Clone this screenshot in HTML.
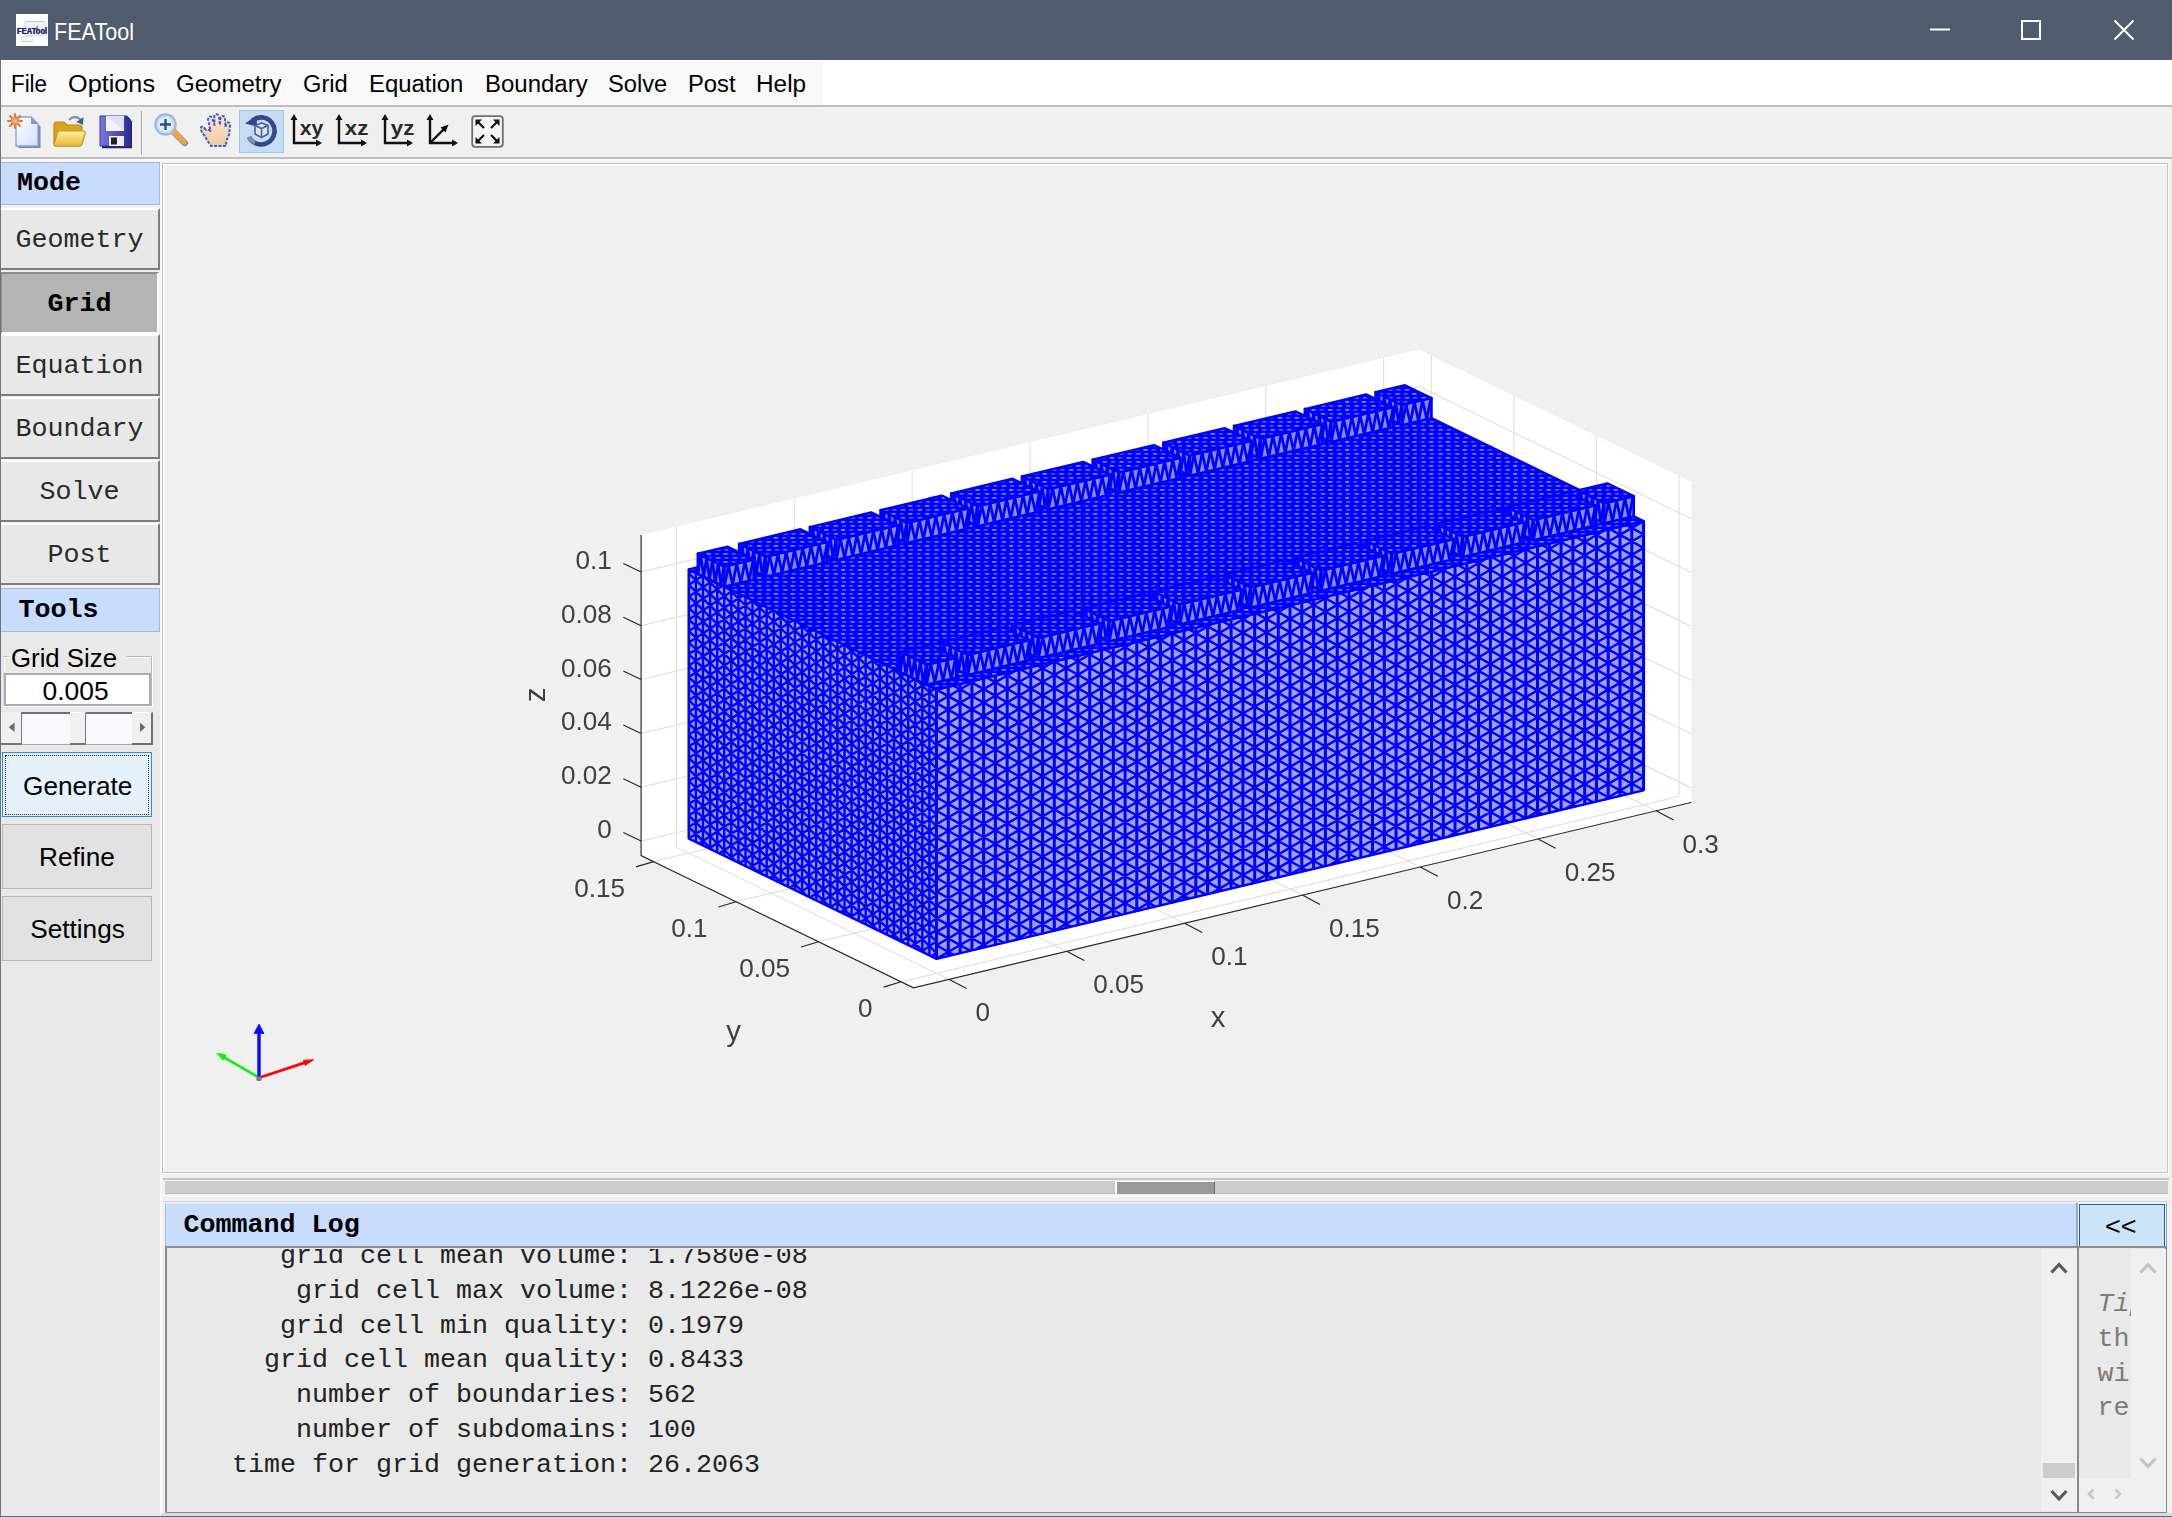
<!DOCTYPE html>
<html lang="en"><head><meta charset="utf-8"><title>FEATool</title>
<style>
html,body{margin:0;padding:0;}
body{width:2172px;height:1517px;position:relative;overflow:hidden;background:#f0f0f0;}
body>div,.a{position:absolute;}
.t{position:absolute;white-space:pre;line-height:normal;}
svg{display:block;overflow:hidden}
</style></head><body>
<div style="left:0px;top:0px;width:2172px;height:60px;background:#505c6d;"></div>
<div style="left:16px;top:14px;width:32.2px;height:32.2px;background:#fefefe;"></div>
<div style="left:24px;top:21px;width:22.3px;height:15.2px;background:#f1f2f9;border:1px solid #dcdfec;border-top:1.4px solid #b9c8e6;border-radius:2.5px;box-sizing:border-box;"></div>
<div style="left:20.7px;top:36.4px;width:12px;height:6px;background:#f4f5fa;border:1px solid #e0e2ee;border-bottom:1.4px solid #d0d3e2;box-sizing:border-box;"></div>
<svg class="a" style="left:16px;top:14px" width="32" height="32"><path d="M18.5 15.5L22 11L22.5 16Z" fill="#8d84ee"/></svg>
<span class="t" style="left:16.9px;transform-origin:0 0;top:25.6px;font-family:'Liberation Sans', Arial, sans-serif;font-size:8.4px;font-weight:bold;color:#2b2663;transform:scaleX(0.9104);text-shadow:0 0 0.7px #2b2663;">FEATool</span>
<span class="t" style="left:54px;transform-origin:0 0;top:18.8px;font-family:'Liberation Sans', Arial, sans-serif;font-size:23.6px;color:#fff;transform:scaleX(0.9149);">FEATool</span>
<svg class="a" style="left:1900px;top:0" width="272" height="60" viewBox="1900 0 272 60"><path d="M1930 29.5H1950" stroke="#fff" stroke-width="2"/><rect x="2022" y="21" width="18" height="18" fill="none" stroke="#fff" stroke-width="2"/><path d="M2114.5 20.5L2133.5 39.5M2133.5 20.5L2114.5 39.5" stroke="#fff" stroke-width="2"/></svg>
<div style="left:0px;top:60px;width:2172px;height:45px;background:#fff;"></div>
<div style="left:1px;top:61px;width:822px;height:43.5px;background:#f9f9f9;"></div>
<span class="t" style="left:11.4px;transform-origin:0 0;top:70.8px;font-family:'Liberation Sans', Arial, sans-serif;font-size:23.5px;color:#000;transform:scaleX(0.9507);">File</span>
<span class="t" style="left:68.2px;transform-origin:0 0;top:70.8px;font-family:'Liberation Sans', Arial, sans-serif;font-size:23.5px;color:#000;transform:scaleX(1.0742);">Options</span>
<span class="t" style="left:176.4px;transform-origin:0 0;top:70.8px;font-family:'Liberation Sans', Arial, sans-serif;font-size:23.5px;color:#000;transform:scaleX(1.0235);">Geometry</span>
<span class="t" style="left:302.8px;transform-origin:0 0;top:70.8px;font-family:'Liberation Sans', Arial, sans-serif;font-size:23.5px;color:#000;transform:scaleX(1.0068);">Grid</span>
<span class="t" style="left:368.7px;transform-origin:0 0;top:70.8px;font-family:'Liberation Sans', Arial, sans-serif;font-size:23.5px;color:#000;transform:scaleX(1.0164);">Equation</span>
<span class="t" style="left:484.7px;transform-origin:0 0;top:70.8px;font-family:'Liberation Sans', Arial, sans-serif;font-size:23.5px;color:#000;transform:scaleX(1.0209);">Boundary</span>
<span class="t" style="left:608.2px;transform-origin:0 0;top:70.8px;font-family:'Liberation Sans', Arial, sans-serif;font-size:23.5px;color:#000;transform:scaleX(1.0070);">Solve</span>
<span class="t" style="left:687.8px;transform-origin:0 0;top:70.8px;font-family:'Liberation Sans', Arial, sans-serif;font-size:23.5px;color:#000;transform:scaleX(1.0123);">Post</span>
<span class="t" style="left:755.7px;transform-origin:0 0;top:70.8px;font-family:'Liberation Sans', Arial, sans-serif;font-size:23.5px;color:#000;transform:scaleX(1.0366);">Help</span>
<div style="left:0px;top:105px;width:2172px;height:2px;background:#bebebe;"></div>
<div style="left:0px;top:107px;width:2172px;height:50px;background:#f0f0f0;"></div>
<div style="left:0px;top:157px;width:2172px;height:2px;background:#bfbfbf;"></div>
<div style="left:0px;top:159px;width:2172px;height:3px;background:#f8f8f8;"></div>
<div style="left:141px;top:111px;width:1px;height:44px;background:#a0a0a0;"></div>
<div style="left:142px;top:111px;width:1px;height:44px;background:#ffffff;"></div>
<div style="left:238.5px;top:109.5px;width:45px;height:43.5px;background:#c5dcf2;border:1px solid #99c9f3;box-sizing:border-box;"></div>
<svg class="a" width="0" height="0"><defs><linearGradient id="gpg" x1="0" y1="0" x2="1" y2="1"><stop offset="0" stop-color="#ffffff"/><stop offset="1" stop-color="#cfe0fa"/></linearGradient><linearGradient id="gfo" x1="0" y1="0" x2="0" y2="1"><stop offset="0" stop-color="#fdf0a0"/><stop offset="1" stop-color="#e9b93a"/></linearGradient><linearGradient id="gsv" x1="0" y1="0" x2="1" y2="0"><stop offset="0" stop-color="#7a78e0"/><stop offset="1" stop-color="#2c2a94"/></linearGradient><linearGradient id="ghd" x1="0" y1="0" x2="0" y2="1"><stop offset="0" stop-color="#fde6d0"/><stop offset="1" stop-color="#f3c9a4"/></linearGradient></defs></svg>
<svg class="a" style="left:6px;top:112px" width="36" height="36" viewBox="0 0 36 36"><path d="M11 6H26L33 13V35H11Z" fill="#7f86b4" transform="translate(1.5,1.5)"/><path d="M10 5H25L32 12V34H10Z" fill="url(#gpg)" stroke="#8ea0d8" stroke-width="1.4"/><path d="M25 5V12H32Z" fill="#8b94c8"/><g stroke="#e8733a" stroke-width="2" stroke-linecap="round"><path d="M9 2V16M2 9H16M4 4L14 14M14 4L4 14"/></g><circle cx="9" cy="9" r="4.2" fill="#f58a52"/><circle cx="9" cy="9" r="2" fill="#ffd37a"/></svg>
<svg class="a" style="left:52px;top:112px" width="36" height="36" viewBox="0 0 36 36"><path d="M2 13Q2 10 5 10H12L15 13H27Q30 13 30 16V31Q30 34 27 34H5Q2 34 2 31Z" fill="#d9a520" stroke="#b98a14" stroke-width="1.2"/><path d="M6 19H31Q34 19 33 22L30 32Q29.5 34 27 34H4Q1.5 34 2.3 31.5Z" fill="url(#gfo)" stroke="#c79a1e" stroke-width="1.2"/><path d="M17 8Q23 2 29 8" fill="none" stroke="#8094b8" stroke-width="2.2"/><path d="M31.5 5L31 13L24.5 10Z" fill="#3b5ea8"/></svg>
<svg class="a" style="left:98px;top:114px" width="36" height="36" viewBox="0 0 36 36"><path d="M3 3H30L33 6V33H3Z" fill="#23206e" transform="translate(1,1.2)"/><path d="M2 2H29L32 5V32H2Z" fill="url(#gsv)" stroke="#3a379e" stroke-width="1"/><path d="M8 2H26V17H8Z" fill="#f4f4fb"/><path d="M8 2H26V17Z" fill="#dfe2f2"/><path d="M11 22H26V32H11Z" fill="#eeeeee"/><path d="M13 23.5H19V30.5H13Z" fill="#222"/></svg>
<svg class="a" style="left:153px;top:112px" width="36" height="36" viewBox="0 0 36 36"><path d="M18 17L31 30" stroke="#9a8c86" stroke-width="6.5" stroke-linecap="round" transform="translate(0.8,1)"/><path d="M19 18L31 30" stroke="#f0a63c" stroke-width="5" stroke-linecap="round"/><circle cx="12.5" cy="12.5" r="10" fill="#dff1fb" stroke="#a9b3e0" stroke-width="2.4"/><circle cx="12.5" cy="12.5" r="8" fill="none" stroke="#c3e3f4" stroke-width="1.6"/><path d="M12.5 7V18M7 12.5H18" stroke="#2a4a9a" stroke-width="2.4"/></svg>
<svg class="a" style="left:198px;top:113px" width="36" height="36" viewBox="0 0 36 36"><path d="M8 17Q4 12 3 14.5Q2 17 6 22Q9 27 13 33H28Q28 27 31 22L32 12Q32 9 29.5 9.5Q28 10 27.5 14L27 6Q27 3 24.5 3Q22.5 3 22.3 6L22 12L21 4Q20.5 1 18.5 1.3Q16.3 1.5 16.3 4L16.5 12L14.5 6Q13.5 3 11.5 3.7Q9.5 4.5 10.3 7.5L12.5 18Q10 16 8 17Z" fill="url(#ghd)" stroke="#3c5fc0" stroke-width="2" stroke-dasharray="3 1.4" stroke-linejoin="round"/></svg>
<svg class="a" style="left:243px;top:112px" width="36" height="36" viewBox="0 0 36 36"><path d="M9.5 8.5A13.5 13.5 0 1 1 6 25" fill="none" stroke="#33478a" stroke-width="4.6"/><path d="M6 25A13.5 13.5 0 0 0 12 30.5" fill="none" stroke="#7f8db8" stroke-width="4.2"/><path d="M2 11.5L13.5 3.5L14 14.5Z" fill="#33478a"/><path d="M12 13.5L18.5 11L25 13.5V22L18.5 25.5L12 22Z" fill="#dce6f6" stroke="#4a5f9c" stroke-width="1.6" stroke-linejoin="round"/><path d="M12 13.5L18.5 16.5L25 13.5M18.5 16.5V25.5" fill="none" stroke="#4a5f9c" stroke-width="1.6"/></svg>
<svg class="a" style="left:290px;top:114px" width="34" height="34" viewBox="0 0 34 34"><path d="M4 4V29H30" fill="none" stroke="#111" stroke-width="2.4"/><path d="M4 0L0.5 6H7.5Z M32 29L26 25.5V32.5Z" fill="#111"/><text x="9.8" y="21.3" font-family="'Liberation Sans',Arial,sans-serif" font-weight="bold" font-size="20.5" fill="#2a2a2a" textLength="23.6" lengthAdjust="spacingAndGlyphs">xy</text></svg>
<svg class="a" style="left:335px;top:114px" width="34" height="34" viewBox="0 0 34 34"><path d="M4 4V29H30" fill="none" stroke="#111" stroke-width="2.4"/><path d="M4 0L0.5 6H7.5Z M32 29L26 25.5V32.5Z" fill="#111"/><text x="9.8" y="21.3" font-family="'Liberation Sans',Arial,sans-serif" font-weight="bold" font-size="20.5" fill="#2a2a2a" textLength="23.6" lengthAdjust="spacingAndGlyphs">xz</text></svg>
<svg class="a" style="left:380.5px;top:114px" width="34" height="34" viewBox="0 0 34 34"><path d="M4 4V29H30" fill="none" stroke="#111" stroke-width="2.4"/><path d="M4 0L0.5 6H7.5Z M32 29L26 25.5V32.5Z" fill="#111"/><text x="9.8" y="21.3" font-family="'Liberation Sans',Arial,sans-serif" font-weight="bold" font-size="20.5" fill="#2a2a2a" textLength="23.6" lengthAdjust="spacingAndGlyphs">yz</text></svg>
<svg class="a" style="left:426px;top:114px" width="34" height="34" viewBox="0 0 34 34"><path d="M4 4V29H30" fill="none" stroke="#111" stroke-width="2.4"/><path d="M4 0L0.5 6H7.5Z M32 29L26 25.5V32.5Z" fill="#111"/><path d="M4 29L18 15" stroke="#111" stroke-width="2.4"/><path d="M22.5 10.5L14.5 13.5L19.5 18.5Z" fill="#111"/></svg>
<svg class="a" style="left:471px;top:114.5px" width="33" height="33" viewBox="0 0 33 33"><rect x="1.2" y="1.2" width="30.6" height="30.6" rx="3" fill="#f4f4f4" stroke="#6f6f6f" stroke-width="1.8"/><g stroke="#111" stroke-width="2.2" fill="none"><path d="M13 13L6 6M20 13L27 6M13 20L6 27M20 20L27 27"/></g><path d="M4.5 4.5H11L4.5 11Z M28.5 4.5H22L28.5 11Z M4.5 28.5H11L4.5 22Z M28.5 28.5H22L28.5 22Z" fill="#111"/></svg>
<div style="left:1px;top:162px;width:158.5px;height:43px;background:#c8dcfd;border:1px solid #a9b8d6;border-left:none;box-sizing:border-box;"></div>
<span class="t" style="left:17px;transform-origin:0 0;top:167.8px;font-family:'Liberation Mono', 'Courier New', monospace;font-size:26.7px;font-weight:bold;color:#000;">Mode</span>
<div style="left:1px;top:208px;width:158.5px;height:62px;background:#e8e8e8;border-top:2px solid #fff;border-right:2px solid #7e7e7e;border-bottom:2px solid #7e7e7e;box-sizing:border-box;"></div>
<span class="t" style="left:15.5px;transform-origin:0 0;top:224.6px;font-family:'Liberation Mono', 'Courier New', monospace;font-size:26.7px;color:#2a2a2a;">Geometry</span>
<div style="left:1px;top:272px;width:158.2px;height:62px;background:#b4b4b4;border-top:2px solid #8c8c8c;border-left:1px solid #8c8c8c;border-right:2px solid #fff;border-bottom:2px solid #fff;box-sizing:border-box;"></div>
<span class="t" style="left:47.5px;transform-origin:0 0;top:288.6px;font-family:'Liberation Mono', 'Courier New', monospace;font-size:26.7px;font-weight:bold;color:#000;">Grid</span>
<div style="left:1px;top:334px;width:158.5px;height:62px;background:#e8e8e8;border-top:2px solid #fff;border-right:2px solid #7e7e7e;border-bottom:2px solid #7e7e7e;box-sizing:border-box;"></div>
<span class="t" style="left:15.5px;transform-origin:0 0;top:350.6px;font-family:'Liberation Mono', 'Courier New', monospace;font-size:26.7px;color:#2a2a2a;">Equation</span>
<div style="left:1px;top:397px;width:158.5px;height:62px;background:#e8e8e8;border-top:2px solid #fff;border-right:2px solid #7e7e7e;border-bottom:2px solid #7e7e7e;box-sizing:border-box;"></div>
<span class="t" style="left:15.5px;transform-origin:0 0;top:413.6px;font-family:'Liberation Mono', 'Courier New', monospace;font-size:26.7px;color:#2a2a2a;">Boundary</span>
<div style="left:1px;top:460px;width:158.5px;height:62px;background:#e8e8e8;border-top:2px solid #fff;border-right:2px solid #7e7e7e;border-bottom:2px solid #7e7e7e;box-sizing:border-box;"></div>
<span class="t" style="left:39.5px;transform-origin:0 0;top:476.6px;font-family:'Liberation Mono', 'Courier New', monospace;font-size:26.7px;color:#2a2a2a;">Solve</span>
<div style="left:1px;top:523px;width:158.5px;height:62px;background:#e8e8e8;border-top:2px solid #fff;border-right:2px solid #7e7e7e;border-bottom:2px solid #7e7e7e;box-sizing:border-box;"></div>
<span class="t" style="left:47.5px;transform-origin:0 0;top:539.6px;font-family:'Liberation Mono', 'Courier New', monospace;font-size:26.7px;color:#2a2a2a;">Post</span>
<div style="left:1px;top:588px;width:158.5px;height:43.5px;background:#c8dcfd;border:1px solid #a9b8d6;border-left:none;box-sizing:border-box;"></div>
<span class="t" style="left:18.5px;transform-origin:0 0;top:594.8px;font-family:'Liberation Mono', 'Courier New', monospace;font-size:26.7px;font-weight:bold;color:#000;">Tools</span>
<div style="left:1px;top:632px;width:159px;height:885px;background:#e9e9e9;"></div>
<div style="left:2.5px;top:656.3px;width:149.5px;height:51px;border:1px solid #b9b9b9;border-bottom:none;border-left-color:#d9d9d9;box-sizing:border-box;box-shadow:1px 1px 0 #fff inset, 1px 0 0 #fff;"></div>
<div style="left:8.5px;top:645px;width:118px;height:28px;background:#e9e9e9;"></div>
<span class="t" style="left:11px;transform-origin:0 0;top:643.3px;font-family:'Liberation Sans', Arial, sans-serif;font-size:26.6px;color:#000;transform:scaleX(0.9690);">Grid Size</span>
<div style="left:4px;top:673px;width:147.2px;height:33.2px;background:#fff;border:2px solid #abadb3;box-sizing:border-box;"></div>
<div style="left:2.5px;top:706.2px;width:150px;height:1.3px;background:#fbfbfb;"></div>
<span class="t" style="left:42.6px;transform-origin:0 0;top:675.7px;font-family:'Liberation Sans', Arial, sans-serif;font-size:26.4px;color:#000;">0.005</span>
<div style="left:2px;top:712.3px;width:150.6px;height:32.5px;background:#f8f8fd;border-bottom:1.5px solid #a8a8a8;box-sizing:border-box;"></div>
<div style="left:21.5px;top:712.3px;width:48.2px;height:1.4px;background:#707070;"></div>
<div style="left:85.4px;top:712.3px;width:46.3px;height:1.4px;background:#707070;"></div>
<div style="left:1.2px;top:712.3px;width:20.6px;height:32.5px;background:#f0f0f0;border-right:1.6px solid #7a7a7a;border-bottom:2px solid #747474;box-sizing:border-box;"></div>
<div style="left:69.7px;top:712.3px;width:16.6px;height:32.5px;background:#f0f0f0;border-right:1.6px solid #757575;border-bottom:2px solid #747474;border-top:1px solid #fdfdfd;box-sizing:border-box;"></div>
<div style="left:131.7px;top:712.3px;width:20.9px;height:32.5px;background:#f0f0f0;border-right:2px solid #6e6e6e;border-bottom:2px solid #707070;border-top:1px solid #fdfdfd;box-sizing:border-box;"></div>
<svg class="a" style="left:0;top:712px" width="160" height="33"><path d="M14.6 10.6V20L8.7 15.3Z M140 10.6V20L145.3 15.3Z" fill="#6a6a6a"/></svg>
<div style="left:2.4px;top:752.1px;width:149.4px;height:65.1px;background:#e5f1fb;border:1.5px solid #2b90ea;box-sizing:border-box;"></div>
<div style="left:4.8px;top:754.6px;width:144.6px;height:60px;border:1.4px dotted #2a2a2a;box-sizing:border-box;"></div>
<span class="t" style="left:22.8px;transform-origin:0 0;top:770.6px;font-family:'Liberation Sans', Arial, sans-serif;font-size:26.2px;color:#000;transform:scaleX(1.0014);">Generate</span>
<div style="left:2.4px;top:824.1px;width:149.4px;height:65px;background:#e1e1e1;border:1.2px solid #b8b8b8;box-sizing:border-box;"></div>
<span class="t" style="left:39.1px;transform-origin:0 0;top:842.1px;font-family:'Liberation Sans', Arial, sans-serif;font-size:26.2px;color:#000;">Refine</span>
<div style="left:2.4px;top:896.2px;width:149.4px;height:65px;background:#e1e1e1;border:1.2px solid #b8b8b8;box-sizing:border-box;"></div>
<span class="t" style="left:30.2px;transform-origin:0 0;top:914.1px;font-family:'Liberation Sans', Arial, sans-serif;font-size:26.2px;color:#000;">Settings</span>
<div style="left:160px;top:162px;width:1.5px;height:1355px;background:#fafafa;"></div>
<div style="left:0px;top:60px;width:1.2px;height:1457px;background:#6a7482;"></div>
<div style="left:162px;top:163px;width:2006px;height:1010px;background:#f0f0f0;border:1.5px solid #c3c3c3;box-sizing:border-box;box-shadow:1.5px 1.5px 0 #fdfdfd inset, 1px 1px 0 #fdfdfd;"></div>
<svg style="position:absolute;left:165px;top:165px;will-change:transform" width="2002" height="1007" viewBox="165 165 2002 1007">
<polygon points="913.5,987.8 1691.3,802.4 1418.9,670.2 641.1,855.6" fill="#ffffff"/>
<polygon points="641.1,855.6 1418.9,670.2 1418.9,349.6 641.1,535" fill="#ffffff"/>
<polygon points="1691.3,802.4 1418.9,670.2 1418.9,349.6 1691.3,481.8" fill="#ffffff"/>
<path d="M948.9 979.3 L676.5 847.2 L676.5 526.6M1066.7 951.3 L794.3 819.1 L794.3 498.5M1184.6 923.2 L912.2 791 L912.2 470.4M1302.4 895.1 L1030 762.9 L1030 442.3M1420.3 867 L1147.9 734.8 L1147.9 414.2M1538.1 838.9 L1265.7 706.8 L1265.7 386.1M1656 810.8 L1383.6 678.7 L1383.6 358.1M901.1 981.8 L1679 796.4 L1679 475.8M818.6 941.7 L1596.4 756.4 L1596.4 435.7M736 901.7 L1513.9 716.3 L1513.9 395.7M653.5 861.6 L1431.3 676.3 L1431.3 355.6M641.1 841.1 L1418.9 655.7 L1691.3 787.9M641.1 787.2 L1418.9 601.9 L1691.3 734M641.1 733.4 L1418.9 548 L1691.3 680.2M641.1 679.5 L1418.9 494.2 L1691.3 626.4M641.1 625.7 L1418.9 440.3 L1691.3 572.5M641.1 571.9 L1418.9 386.5 L1691.3 518.7" fill="none" stroke="#e1e1e1" stroke-width="1.2"/>
<g stroke-linecap="butt"><defs><pattern id="tp" width="16.8" height="8" patternUnits="userSpaceOnUse"><rect width="16.8" height="8" fill="#0000ff"/><rect x="1" y="1.2" width="4.2" height="1.4" fill="#a8a8ff"/><rect x="9.4" y="1.2" width="3.8" height="1.3" fill="#7070ff"/><rect x="2.2" y="5.2" width="3.8" height="1.3" fill="#7c7cff"/><rect x="10.6" y="5.2" width="4.2" height="1.4" fill="#9898ff"/></pattern></defs>
<polygon points="688.9,838.6 936.5,958.8 936.5,689.6 688.9,569.5" fill="#9c9cf6" stroke="#0000ff" stroke-width="2.4" stroke-linejoin="round"/><path d="M688.9 838.6 L688.9 569.5M695.9 842.1 L695.9 572.9M703 845.5 L703 576.3M710.1 848.9 L710.1 579.7M717.2 852.4 L717.2 583.2M724.2 855.8 L724.2 586.6M731.3 859.2 L731.3 590M738.4 862.7 L738.4 593.5M745.5 866.1 L745.5 596.9M752.5 869.5 L752.5 600.3M759.6 873 L759.6 603.8M766.7 876.4 L766.7 607.2M773.8 879.8 L773.8 610.6M780.8 883.3 L780.8 614.1M787.9 886.7 L787.9 617.5M795 890.1 L795 620.9M802.1 893.6 L802.1 624.4M809.1 897 L809.1 627.8M816.2 900.4 L816.2 631.2M823.3 903.9 L823.3 634.7M830.4 907.3 L830.4 638.1M837.4 910.7 L837.4 641.5M844.5 914.2 L844.5 645M851.6 917.6 L851.6 648.4M858.7 921 L858.7 651.8M865.7 924.5 L865.7 655.3M872.8 927.9 L872.8 658.7M879.9 931.3 L879.9 662.1M887 934.8 L887 665.6M894 938.2 L894 669M901.1 941.6 L901.1 672.4M908.2 945.1 L908.2 675.9M915.3 948.5 L915.3 679.3M922.3 951.9 L922.3 682.7M929.4 955.4 L929.4 686.2M936.5 958.8 L936.5 689.6M688.9 827.1 L712.4 850.1M688.9 815.6 L736 861.5M688.9 804 L759.6 873M688.9 792.5 L783.2 884.4M688.9 781 L806.8 895.9M688.9 769.4 L830.4 907.3M688.9 757.9 L854 918.8M688.9 746.4 L877.5 930.2M688.9 734.8 L901.1 941.6M688.9 723.3 L924.7 953.1M688.9 711.7 L936.5 953M688.9 700.2 L936.5 941.5M688.9 688.7 L936.5 930M688.9 677.1 L936.5 918.4M688.9 665.6 L936.5 906.9M688.9 654.1 L936.5 895.3M688.9 642.5 L936.5 883.8M688.9 631 L936.5 872.3M688.9 619.4 L936.5 860.7M688.9 607.9 L936.5 849.2M688.9 596.4 L936.5 837.7M688.9 584.8 L936.5 826.1M688.9 573.3 L936.5 814.6M704.6 577.1 L936.5 803M728.2 588.5 L936.5 791.5M751.7 600 L936.5 780M775.3 611.4 L936.5 768.4M798.9 622.8 L936.5 756.9M822.5 634.3 L936.5 745.4M846.1 645.7 L936.5 733.8M869.7 657.2 L936.5 722.3M893.3 668.6 L936.5 710.8M916.8 680.1 L936.5 699.2M931.4 956.3 L936.5 953M921.3 951.4 L936.5 941.5M911.2 946.5 L936.5 930M901.1 941.6 L936.5 918.4M891 936.7 L936.5 906.9M880.9 931.8 L936.5 895.3M870.8 926.9 L936.5 883.8M860.7 922 L936.5 872.3M850.6 917.1 L936.5 860.7M840.5 912.2 L936.5 849.2M830.4 907.3 L936.5 837.7M820.3 902.4 L936.5 826.1M810.1 897.5 L936.5 814.6M800 892.6 L936.5 803M789.9 887.7 L936.5 791.5M779.8 882.8 L936.5 780M769.7 877.9 L936.5 768.4M759.6 873 L936.5 756.9M749.5 868.1 L936.5 745.4M739.4 863.2 L936.5 733.8M729.3 858.3 L936.5 722.3M719.2 853.4 L936.5 710.8M709.1 848.5 L936.5 699.2M699 843.6 L934.8 688.8M688.9 838.6 L924.7 683.9M688.9 827.1 L914.6 679M688.9 815.6 L904.5 674.1M688.9 804 L894.4 669.2M688.9 792.5 L884.3 664.3M688.9 781 L874.2 659.4M688.9 769.4 L864.1 654.5M688.9 757.9 L854 649.5M688.9 746.4 L843.8 644.6M688.9 734.8 L833.7 639.7M688.9 723.3 L823.6 634.8M688.9 711.7 L813.5 629.9M688.9 700.2 L803.4 625M688.9 688.7 L793.3 620.1M688.9 677.1 L783.2 615.2M688.9 665.6 L773.1 610.3M688.9 654.1 L763 605.4M688.9 642.5 L752.9 600.5M688.9 631 L742.8 595.6M688.9 619.4 L732.7 590.7M688.9 607.9 L722.5 585.8M688.9 596.4 L712.4 580.9M688.9 584.8 L702.3 576M688.9 573.3 L692.2 571.1" fill="none" stroke="#0000ff" stroke-width="2.4"/>
<polygon points="936.5,958.8 1643.6,790.3 1643.6,521.1 936.5,689.6" fill="#a0a0f6" stroke="#0000ff" stroke-width="2.4" stroke-linejoin="round"/><path d="M936.5 958.8 L936.5 689.6M948.3 956 L948.3 686.8M960.1 953.2 L960.1 684M971.9 950.4 L971.9 681.2M983.6 947.6 L983.6 678.4M995.4 944.8 L995.4 675.6M1007.2 941.9 L1007.2 672.7M1019 939.1 L1019 669.9M1030.8 936.3 L1030.8 667.1M1042.6 933.5 L1042.6 664.3M1054.3 930.7 L1054.3 661.5M1066.1 927.9 L1066.1 658.7M1077.9 925.1 L1077.9 655.9M1089.7 922.3 L1089.7 653.1M1101.5 919.5 L1101.5 650.3M1113.3 916.7 L1113.3 647.5M1125.1 913.9 L1125.1 644.7M1136.8 911.1 L1136.8 641.9M1148.6 908.2 L1148.6 639M1160.4 905.4 L1160.4 636.2M1172.2 902.6 L1172.2 633.4M1184 899.8 L1184 630.6M1195.8 897 L1195.8 627.8M1207.6 894.2 L1207.6 625M1219.3 891.4 L1219.3 622.2M1231.1 888.6 L1231.1 619.4M1242.9 885.8 L1242.9 616.6M1254.7 883 L1254.7 613.8M1266.5 880.2 L1266.5 611M1278.3 877.4 L1278.3 608.2M1290 874.5 L1290 605.3M1301.8 871.7 L1301.8 602.5M1313.6 868.9 L1313.6 599.7M1325.4 866.1 L1325.4 596.9M1337.2 863.3 L1337.2 594.1M1349 860.5 L1349 591.3M1360.8 857.7 L1360.8 588.5M1372.5 854.9 L1372.5 585.7M1384.3 852.1 L1384.3 582.9M1396.1 849.3 L1396.1 580.1M1407.9 846.5 L1407.9 577.3M1419.7 843.7 L1419.7 574.5M1431.5 840.8 L1431.5 571.6M1443.3 838 L1443.3 568.8M1455 835.2 L1455 566M1466.8 832.4 L1466.8 563.2M1478.6 829.6 L1478.6 560.4M1490.4 826.8 L1490.4 557.6M1502.2 824 L1502.2 554.8M1514 821.2 L1514 552M1525.8 818.4 L1525.8 549.2M1537.5 815.6 L1537.5 546.4M1549.3 812.8 L1549.3 543.6M1561.1 809.9 L1561.1 540.7M1572.9 807.1 L1572.9 537.9M1584.7 804.3 L1584.7 535.1M1596.5 801.5 L1596.5 532.3M1608.2 798.7 L1608.2 529.5M1620 795.9 L1620 526.7M1631.8 793.1 L1631.8 523.9M1643.6 790.3 L1643.6 521.1" fill="none" stroke="#0000ff" stroke-width="3"/><path d="M1604.3 799.7 L1643.6 776.8M1565 809 L1643.6 763.4M1525.8 818.4 L1643.6 749.9M1486.5 827.7 L1643.6 736.4M1447.2 837.1 L1643.6 723M1407.9 846.5 L1643.6 709.5M1368.6 855.8 L1643.6 696.1M1329.3 865.2 L1643.6 682.6M1290 874.5 L1643.6 669.1M1250.8 883.9 L1643.6 655.7M1211.5 893.3 L1643.6 642.2M1172.2 902.6 L1643.6 628.8M1132.9 912 L1643.6 615.3M1093.6 921.4 L1643.6 601.8M1054.3 930.7 L1643.6 588.4M1015.1 940.1 L1643.6 574.9M975.8 949.4 L1643.6 561.5M936.5 958.8 L1643.6 548M936.5 945.3 L1643.6 534.5M936.5 931.9 L1643.6 521.1M936.5 918.4 L1604.3 530.5M936.5 905 L1565 539.8M936.5 891.5 L1525.8 549.2M936.5 878 L1486.5 558.5M936.5 864.6 L1447.2 567.9M936.5 851.1 L1407.9 577.3M936.5 837.7 L1368.6 586.6M936.5 824.2 L1329.3 596M936.5 810.7 L1290 605.3M936.5 797.3 L1250.8 614.7M936.5 783.8 L1211.5 624.1M936.5 770.4 L1172.2 633.4M936.5 756.9 L1132.9 642.8M936.5 743.4 L1093.6 652.2M936.5 730 L1054.3 661.5M936.5 716.5 L1015.1 670.9M936.5 703.1 L975.8 680.2M936.5 945.3 L953.3 954.8M936.5 931.9 L970.2 950.8M936.5 918.4 L987 946.8M936.5 905 L1003.8 942.8M936.5 891.5 L1020.7 938.7M936.5 878 L1037.5 934.7M936.5 864.6 L1054.3 930.7M936.5 851.1 L1071.2 926.7M936.5 837.7 L1088 922.7M936.5 824.2 L1104.9 918.7M936.5 810.7 L1121.7 914.7M936.5 797.3 L1138.5 910.7M936.5 783.8 L1155.4 906.6M936.5 770.4 L1172.2 902.6M936.5 756.9 L1189 898.6M936.5 743.4 L1205.9 894.6M936.5 730 L1222.7 890.6M936.5 716.5 L1239.5 886.6M936.5 703.1 L1256.4 882.6M936.5 689.6 L1273.2 878.6M953.3 685.6 L1290.1 874.5M970.2 681.6 L1306.9 870.5M987 677.6 L1323.7 866.5M1003.8 673.6 L1340.6 862.5M1020.7 669.5 L1357.4 858.5M1037.5 665.5 L1374.2 854.5M1054.3 661.5 L1391.1 850.5M1071.2 657.5 L1407.9 846.5M1088 653.5 L1424.7 842.4M1104.9 649.5 L1441.6 838.4M1121.7 645.5 L1458.4 834.4M1138.5 641.5 L1475.2 830.4M1155.4 637.4 L1492.1 826.4M1172.2 633.4 L1508.9 822.4M1189 629.4 L1525.8 818.4M1205.9 625.4 L1542.6 814.4M1222.7 621.4 L1559.4 810.4M1239.5 617.4 L1576.3 806.3M1256.4 613.4 L1593.1 802.3M1273.2 609.4 L1609.9 798.3M1290.1 605.3 L1626.8 794.3M1306.9 601.3 L1643.6 790.3M1323.7 597.3 L1643.6 776.8M1340.6 593.3 L1643.6 763.4M1357.4 589.3 L1643.6 749.9M1374.2 585.3 L1643.6 736.4M1391.1 581.3 L1643.6 723M1407.9 577.3 L1643.6 709.5M1424.7 573.2 L1643.6 696.1M1441.6 569.2 L1643.6 682.6M1458.4 565.2 L1643.6 669.1M1475.2 561.2 L1643.6 655.7M1492.1 557.2 L1643.6 642.2M1508.9 553.2 L1643.6 628.8M1525.8 549.2 L1643.6 615.3M1542.6 545.2 L1643.6 601.8M1559.4 541.2 L1643.6 588.4M1576.3 537.1 L1643.6 574.9M1593.1 533.1 L1643.6 561.5M1609.9 529.1 L1643.6 548M1626.8 525.1 L1643.6 534.5" fill="none" stroke="#0000ff" stroke-width="2.4"/>
<polygon points="936.5,689.6 1643.6,521.1 1395.9,400.9 688.8,569.4" fill="url(#tp)" stroke="#0000ff" stroke-width="2.3" stroke-linejoin="round"/>
<polygon points="1375.6,412.4 1402,425.2 1402,405 1375.6,392.2" fill="#8686f4" stroke="#0000ff" stroke-width="2.7" stroke-linejoin="round"/><path d="M1375.6 412.4 L1378.5 393.6M1381.3 415.2 L1384.2 396.4M1387.1 418 L1390 399.2M1392.9 420.8 L1395.8 402M1398.7 423.6 L1401.6 404.8M1378.5 393.6 L1381.3 415.2M1384.2 396.4 L1387.1 418M1390 399.2 L1392.9 420.8M1395.8 402 L1398.7 423.6M1401.6 404.8 L1402 407.9" fill="none" stroke="#0000ff" stroke-width="2.7"/><polygon points="1402,425.2 1431.4,418.2 1431.4,398 1402,405" fill="#8c8cf5" stroke="#0000ff" stroke-width="2.7" stroke-linejoin="round"/><path d="M1402 425.2 L1406.1 404M1410.2 423.2 L1414.4 402M1418.5 421.3 L1422.6 400.1M1426.7 419.3 L1430.9 398.1M1406.1 404 L1410.2 423.2M1414.4 402 L1418.5 421.3M1422.6 400.1 L1426.7 419.3M1430.9 398.1 L1431.4 400.9" fill="none" stroke="#0000ff" stroke-width="2.7"/><polygon points="1402,405 1431.4,398 1405,385.2 1375.6,392.2" fill="url(#tp)" stroke="#0000ff" stroke-width="2.3" stroke-linejoin="round"/>
<polygon points="1304.9,429.2 1331.3,442 1331.3,421.8 1304.9,409" fill="#8686f4" stroke="#0000ff" stroke-width="2.7" stroke-linejoin="round"/><path d="M1304.9 429.2 L1307.7 410.4M1310.6 432 L1313.5 413.2M1316.4 434.8 L1319.3 416M1322.2 437.6 L1325.1 418.8M1328 440.4 L1330.9 421.6M1307.7 410.4 L1310.6 432M1313.5 413.2 L1316.4 434.8M1319.3 416 L1322.2 437.6M1325.1 418.8 L1328 440.4M1330.9 421.6 L1331.3 424.7" fill="none" stroke="#0000ff" stroke-width="2.7"/><polygon points="1331.3,442 1392.6,427.4 1392.6,407.2 1331.3,421.8" fill="#8c8cf5" stroke="#0000ff" stroke-width="2.7" stroke-linejoin="round"/><path d="M1331.3 442 L1335.4 420.9M1339.5 440.1 L1343.6 418.9M1347.8 438.1 L1351.9 416.9M1356 436.1 L1360.1 415M1364.3 434.2 L1368.4 413M1372.5 432.2 L1376.6 411M1380.8 430.2 L1384.9 409.1M1389 428.3 L1392.6 410.1M1335.4 420.9 L1339.5 440.1M1343.6 418.9 L1347.8 438.1M1351.9 416.9 L1356 436.1M1360.1 415 L1364.3 434.2M1368.4 413 L1372.5 432.2M1376.6 411 L1380.8 430.2M1384.9 409.1 L1389 428.3" fill="none" stroke="#0000ff" stroke-width="2.7"/><polygon points="1331.3,421.8 1392.6,407.2 1366.1,394.4 1304.9,409" fill="url(#tp)" stroke="#0000ff" stroke-width="2.3" stroke-linejoin="round"/>
<polygon points="1234.1,446.1 1260.6,458.9 1260.6,438.7 1234.1,425.9" fill="#8686f4" stroke="#0000ff" stroke-width="2.7" stroke-linejoin="round"/><path d="M1234.1 446.1 L1237 427.3M1239.9 448.9 L1242.8 430.1M1245.7 451.7 L1248.6 432.9M1251.5 454.5 L1254.4 435.7M1257.3 457.3 L1260.2 438.5M1237 427.3 L1239.9 448.9M1242.8 430.1 L1245.7 451.7M1248.6 432.9 L1251.5 454.5M1254.4 435.7 L1257.3 457.3M1260.2 438.5 L1260.6 441.6" fill="none" stroke="#0000ff" stroke-width="2.7"/><polygon points="1260.6,458.9 1321.8,444.3 1321.8,424.1 1260.6,438.7" fill="#8c8cf5" stroke="#0000ff" stroke-width="2.7" stroke-linejoin="round"/><path d="M1260.6 458.9 L1264.7 437.7M1268.8 456.9 L1272.9 435.7M1277.1 455 L1281.2 433.8M1285.3 453 L1289.4 431.8M1293.6 451 L1297.7 429.8M1301.8 449.1 L1305.9 427.9M1310.1 447.1 L1314.2 425.9M1318.3 445.1 L1321.8 427M1264.7 437.7 L1268.8 456.9M1272.9 435.7 L1277.1 455M1281.2 433.8 L1285.3 453M1289.4 431.8 L1293.6 451M1297.7 429.8 L1301.8 449.1M1305.9 427.9 L1310.1 447.1M1314.2 425.9 L1318.3 445.1" fill="none" stroke="#0000ff" stroke-width="2.7"/><polygon points="1260.6,438.7 1321.8,424.1 1295.4,411.3 1234.1,425.9" fill="url(#tp)" stroke="#0000ff" stroke-width="2.3" stroke-linejoin="round"/>
<polygon points="1163.4,462.9 1189.9,475.7 1189.9,455.5 1163.4,442.7" fill="#8686f4" stroke="#0000ff" stroke-width="2.7" stroke-linejoin="round"/><path d="M1163.4 462.9 L1166.3 444.1M1169.2 465.7 L1172.1 446.9M1175 468.5 L1177.9 449.7M1180.8 471.3 L1183.7 452.5M1186.6 474.1 L1189.4 455.3M1166.3 444.1 L1169.2 465.7M1172.1 446.9 L1175 468.5M1177.9 449.7 L1180.8 471.3M1183.7 452.5 L1186.6 474.1M1189.4 455.3 L1189.9 458.4" fill="none" stroke="#0000ff" stroke-width="2.7"/><polygon points="1189.9,475.7 1251.1,461.1 1251.1,440.9 1189.9,455.5" fill="#8c8cf5" stroke="#0000ff" stroke-width="2.7" stroke-linejoin="round"/><path d="M1189.9 475.7 L1194 454.6M1198.1 473.8 L1202.2 452.6M1206.4 471.8 L1210.5 450.6M1214.6 469.8 L1218.7 448.7M1222.9 467.9 L1227 446.7M1231.1 465.9 L1235.2 444.7M1239.4 463.9 L1243.5 442.8M1247.6 462 L1251.1 443.8M1194 454.6 L1198.1 473.8M1202.2 452.6 L1206.4 471.8M1210.5 450.6 L1214.6 469.8M1218.7 448.7 L1222.9 467.9M1227 446.7 L1231.1 465.9M1235.2 444.7 L1239.4 463.9M1243.5 442.8 L1247.6 462" fill="none" stroke="#0000ff" stroke-width="2.7"/><polygon points="1189.9,455.5 1251.1,440.9 1224.7,428.1 1163.4,442.7" fill="url(#tp)" stroke="#0000ff" stroke-width="2.3" stroke-linejoin="round"/>
<polygon points="1092.7,479.8 1119.1,492.6 1119.1,472.4 1092.7,459.6" fill="#8686f4" stroke="#0000ff" stroke-width="2.7" stroke-linejoin="round"/><path d="M1092.7 479.8 L1095.6 461M1098.5 482.6 L1101.4 463.8M1104.3 485.4 L1107.2 466.6M1110.1 488.2 L1113 469.4M1115.8 491 L1118.7 472.2M1095.6 461 L1098.5 482.6M1101.4 463.8 L1104.3 485.4M1107.2 466.6 L1110.1 488.2M1113 469.4 L1115.8 491M1118.7 472.2 L1119.1 475.3" fill="none" stroke="#0000ff" stroke-width="2.7"/><polygon points="1119.1,492.6 1180.4,478 1180.4,457.8 1119.1,472.4" fill="#8c8cf5" stroke="#0000ff" stroke-width="2.7" stroke-linejoin="round"/><path d="M1119.1 492.6 L1123.3 471.4M1127.4 490.6 L1131.5 469.4M1135.6 488.7 L1139.8 467.5M1143.9 486.7 L1148 465.5M1152.1 484.7 L1156.3 463.5M1160.4 482.8 L1164.5 461.6M1168.6 480.8 L1172.8 459.6M1176.9 478.8 L1180.4 460.7M1123.3 471.4 L1127.4 490.6M1131.5 469.4 L1135.6 488.7M1139.8 467.5 L1143.9 486.7M1148 465.5 L1152.1 484.7M1156.3 463.5 L1160.4 482.8M1164.5 461.6 L1168.6 480.8M1172.8 459.6 L1176.9 478.8" fill="none" stroke="#0000ff" stroke-width="2.7"/><polygon points="1119.1,472.4 1180.4,457.8 1154,445 1092.7,459.6" fill="url(#tp)" stroke="#0000ff" stroke-width="2.3" stroke-linejoin="round"/>
<polygon points="1022,496.6 1048.4,509.4 1048.4,489.2 1022,476.4" fill="#8686f4" stroke="#0000ff" stroke-width="2.7" stroke-linejoin="round"/><path d="M1022 496.6 L1024.9 477.8M1027.8 499.4 L1030.7 480.6M1033.6 502.2 L1036.5 483.4M1039.4 505 L1042.2 486.2M1045.1 507.8 L1048 489M1024.9 477.8 L1027.8 499.4M1030.7 480.6 L1033.6 502.2M1036.5 483.4 L1039.4 505M1042.2 486.2 L1045.1 507.8M1048 489 L1048.4 492.1" fill="none" stroke="#0000ff" stroke-width="2.7"/><polygon points="1048.4,509.4 1109.7,494.8 1109.7,474.6 1048.4,489.2" fill="#8c8cf5" stroke="#0000ff" stroke-width="2.7" stroke-linejoin="round"/><path d="M1048.4 509.4 L1052.6 488.3M1056.7 507.5 L1060.8 486.3M1064.9 505.5 L1069.1 484.3M1073.2 503.5 L1077.3 482.4M1081.4 501.6 L1085.6 480.4M1089.7 499.6 L1093.8 478.4M1097.9 497.6 L1102.1 476.5M1106.2 495.7 L1109.7 477.5M1052.6 488.3 L1056.7 507.5M1060.8 486.3 L1064.9 505.5M1069.1 484.3 L1073.2 503.5M1077.3 482.4 L1081.4 501.6M1085.6 480.4 L1089.7 499.6M1093.8 478.4 L1097.9 497.6M1102.1 476.5 L1106.2 495.7" fill="none" stroke="#0000ff" stroke-width="2.7"/><polygon points="1048.4,489.2 1109.7,474.6 1083.3,461.8 1022,476.4" fill="url(#tp)" stroke="#0000ff" stroke-width="2.3" stroke-linejoin="round"/>
<polygon points="951.3,513.5 977.7,526.3 977.7,506.1 951.3,493.3" fill="#8686f4" stroke="#0000ff" stroke-width="2.7" stroke-linejoin="round"/><path d="M951.3 513.5 L954.2 494.7M957.1 516.3 L960 497.5M962.9 519.1 L965.8 500.3M968.6 521.9 L971.5 503.1M974.4 524.7 L977.3 505.9M954.2 494.7 L957.1 516.3M960 497.5 L962.9 519.1M965.8 500.3 L968.6 521.9M971.5 503.1 L974.4 524.7M977.3 505.9 L977.7 509" fill="none" stroke="#0000ff" stroke-width="2.7"/><polygon points="977.7,526.3 1039,511.7 1039,491.5 977.7,506.1" fill="#8c8cf5" stroke="#0000ff" stroke-width="2.7" stroke-linejoin="round"/><path d="M977.7 526.3 L981.8 505.1M986 524.3 L990.1 503.1M994.2 522.4 L998.3 501.2M1002.5 520.4 L1006.6 499.2M1010.7 518.4 L1014.8 497.3M1019 516.5 L1023.1 495.3M1027.2 514.5 L1031.3 493.3M1035.5 512.5 L1039 494.4M981.8 505.1 L986 524.3M990.1 503.1 L994.2 522.4M998.3 501.2 L1002.5 520.4M1006.6 499.2 L1010.7 518.4M1014.8 497.3 L1019 516.5M1023.1 495.3 L1027.2 514.5M1031.3 493.3 L1035.5 512.5" fill="none" stroke="#0000ff" stroke-width="2.7"/><polygon points="977.7,506.1 1039,491.5 1012.6,478.7 951.3,493.3" fill="url(#tp)" stroke="#0000ff" stroke-width="2.3" stroke-linejoin="round"/>
<polygon points="880.6,530.3 907,543.1 907,522.9 880.6,510.1" fill="#8686f4" stroke="#0000ff" stroke-width="2.7" stroke-linejoin="round"/><path d="M880.6 530.3 L883.5 511.5M886.4 533.1 L889.3 514.3M892.2 535.9 L895 517.1M897.9 538.7 L900.8 519.9M903.7 541.5 L906.6 522.7M883.5 511.5 L886.4 533.1M889.3 514.3 L892.2 535.9M895 517.1 L897.9 538.7M900.8 519.9 L903.7 541.5M906.6 522.7 L907 525.8" fill="none" stroke="#0000ff" stroke-width="2.7"/><polygon points="907,543.1 968.3,528.5 968.3,508.3 907,522.9" fill="#8c8cf5" stroke="#0000ff" stroke-width="2.7" stroke-linejoin="round"/><path d="M907 543.1 L911.1 522M915.3 541.2 L919.4 520M923.5 539.2 L927.6 518M931.8 537.2 L935.9 516.1M940 535.3 L944.1 514.1M948.3 533.3 L952.4 512.1M956.5 531.3 L960.6 510.2M964.8 529.4 L968.3 511.2M911.1 522 L915.3 541.2M919.4 520 L923.5 539.2M927.6 518 L931.8 537.2M935.9 516.1 L940 535.3M944.1 514.1 L948.3 533.3M952.4 512.1 L956.5 531.3M960.6 510.2 L964.8 529.4" fill="none" stroke="#0000ff" stroke-width="2.7"/><polygon points="907,522.9 968.3,508.3 941.9,495.5 880.6,510.1" fill="url(#tp)" stroke="#0000ff" stroke-width="2.3" stroke-linejoin="round"/>
<polygon points="809.9,547.2 836.3,560 836.3,539.8 809.9,527" fill="#8686f4" stroke="#0000ff" stroke-width="2.7" stroke-linejoin="round"/><path d="M809.9 547.2 L812.8 528.4M815.7 550 L818.6 531.2M821.4 552.8 L824.3 534M827.2 555.6 L830.1 536.8M833 558.4 L835.9 539.6M812.8 528.4 L815.7 550M818.6 531.2 L821.4 552.8M824.3 534 L827.2 555.6M830.1 536.8 L833 558.4M835.9 539.6 L836.3 542.7" fill="none" stroke="#0000ff" stroke-width="2.7"/><polygon points="836.3,560 897.6,545.4 897.6,525.2 836.3,539.8" fill="#8c8cf5" stroke="#0000ff" stroke-width="2.7" stroke-linejoin="round"/><path d="M836.3 560 L840.4 538.8M844.6 558 L848.7 536.9M852.8 556.1 L856.9 534.9M861.1 554.1 L865.2 532.9M869.3 552.1 L873.4 531M877.6 550.2 L881.7 529M885.8 548.2 L889.9 527M894.1 546.2 L897.6 528.1M840.4 538.8 L844.6 558M848.7 536.9 L852.8 556.1M856.9 534.9 L861.1 554.1M865.2 532.9 L869.3 552.1M873.4 531 L877.6 550.2M881.7 529 L885.8 548.2M889.9 527 L894.1 546.2" fill="none" stroke="#0000ff" stroke-width="2.7"/><polygon points="836.3,539.8 897.6,525.2 871.2,512.4 809.9,527" fill="url(#tp)" stroke="#0000ff" stroke-width="2.3" stroke-linejoin="round"/>
<polygon points="739.2,564 765.6,576.8 765.6,556.7 739.2,543.8" fill="#8686f4" stroke="#0000ff" stroke-width="2.7" stroke-linejoin="round"/><path d="M739.2 564 L742.1 545.2M745 566.8 L747.8 548M750.7 569.6 L753.6 550.8M756.5 572.4 L759.4 553.6M762.3 575.2 L765.2 556.5M742.1 545.2 L745 566.8M747.8 548 L750.7 569.6M753.6 550.8 L756.5 572.4M759.4 553.6 L762.3 575.2M765.2 556.5 L765.6 559.5" fill="none" stroke="#0000ff" stroke-width="2.7"/><polygon points="765.6,576.8 826.9,562.2 826.9,542 765.6,556.7" fill="#8c8cf5" stroke="#0000ff" stroke-width="2.7" stroke-linejoin="round"/><path d="M765.6 576.8 L769.7 555.7M773.8 574.9 L778 553.7M782.1 572.9 L786.2 551.7M790.3 570.9 L794.5 549.8M798.6 569 L802.7 547.8M806.8 567 L811 545.8M815.1 565 L819.2 543.9M823.3 563.1 L826.9 544.9M769.7 555.7 L773.8 574.9M778 553.7 L782.1 572.9M786.2 551.7 L790.3 570.9M794.5 549.8 L798.6 569M802.7 547.8 L806.8 567M811 545.8 L815.1 565M819.2 543.9 L823.3 563.1" fill="none" stroke="#0000ff" stroke-width="2.7"/><polygon points="765.6,556.7 826.9,542 800.5,529.2 739.2,543.8" fill="url(#tp)" stroke="#0000ff" stroke-width="2.3" stroke-linejoin="round"/>
<polygon points="697.9,573.9 724.3,586.7 724.3,566.5 697.9,553.7" fill="#8686f4" stroke="#0000ff" stroke-width="2.7" stroke-linejoin="round"/><path d="M697.9 573.9 L700.8 555.1M703.7 576.7 L706.6 557.9M709.5 579.5 L712.4 560.7M715.3 582.3 L718.2 563.5M721 585.1 L723.9 566.3M700.8 555.1 L703.7 576.7M706.6 557.9 L709.5 579.5M712.4 560.7 L715.3 582.3M718.2 563.5 L721 585.1M723.9 566.3 L724.3 569.4" fill="none" stroke="#0000ff" stroke-width="2.7"/><polygon points="724.3,586.7 753.8,579.7 753.8,559.5 724.3,566.5" fill="#8c8cf5" stroke="#0000ff" stroke-width="2.7" stroke-linejoin="round"/><path d="M724.3 586.7 L728.5 565.5M732.6 584.7 L736.7 563.5M740.8 582.7 L745 561.6M749.1 580.8 L753.2 559.6M728.5 565.5 L732.6 584.7M736.7 563.5 L740.8 582.7M745 561.6 L749.1 580.8M753.2 559.6 L753.8 562.3" fill="none" stroke="#0000ff" stroke-width="2.7"/><polygon points="724.3,566.5 753.8,559.5 727.4,546.6 697.9,553.7" fill="url(#tp)" stroke="#0000ff" stroke-width="2.3" stroke-linejoin="round"/>
<polygon points="1577.8,510.5 1604.2,523.3 1604.2,503.1 1577.8,490.3" fill="#8686f4" stroke="#0000ff" stroke-width="2.7" stroke-linejoin="round"/><path d="M1577.8 510.5 L1580.7 491.7M1583.6 513.3 L1586.5 494.5M1589.4 516.1 L1592.3 497.3M1595.2 518.9 L1598 500.1M1600.9 521.7 L1603.8 502.9M1580.7 491.7 L1583.6 513.3M1586.5 494.5 L1589.4 516.1M1592.3 497.3 L1595.2 518.9M1598 500.1 L1600.9 521.7M1603.8 502.9 L1604.2 506" fill="none" stroke="#0000ff" stroke-width="2.7"/><polygon points="1604.2,523.3 1633.7,516.3 1633.7,496.1 1604.2,503.1" fill="#8c8cf5" stroke="#0000ff" stroke-width="2.7" stroke-linejoin="round"/><path d="M1604.2 523.3 L1608.4 502.1M1612.5 521.3 L1616.6 500.2M1620.7 519.4 L1624.9 498.2M1629 517.4 L1633.1 496.2M1608.4 502.1 L1612.5 521.3M1616.6 500.2 L1620.7 519.4M1624.9 498.2 L1629 517.4M1633.1 496.2 L1633.7 499" fill="none" stroke="#0000ff" stroke-width="2.7"/><polygon points="1604.2,503.1 1633.7,496.1 1607.3,483.3 1577.8,490.3" fill="url(#tp)" stroke="#0000ff" stroke-width="2.3" stroke-linejoin="round"/>
<polygon points="1507.1,527.3 1533.5,540.2 1533.5,520 1507.1,507.2" fill="#8686f4" stroke="#0000ff" stroke-width="2.7" stroke-linejoin="round"/><path d="M1507.1 527.3 L1510 508.6M1512.9 530.1 L1515.8 511.4M1518.7 532.9 L1521.6 514.2M1524.4 535.8 L1527.3 517M1530.2 538.6 L1533.1 519.8M1510 508.6 L1512.9 530.1M1515.8 511.4 L1518.7 532.9M1521.6 514.2 L1524.4 535.8M1527.3 517 L1530.2 538.6M1533.1 519.8 L1533.5 522.9" fill="none" stroke="#0000ff" stroke-width="2.7"/><polygon points="1533.5,540.2 1594.8,525.6 1594.8,505.4 1533.5,520" fill="#8c8cf5" stroke="#0000ff" stroke-width="2.7" stroke-linejoin="round"/><path d="M1533.5 540.2 L1537.6 519M1541.8 538.2 L1545.9 517M1550 536.2 L1554.1 515.1M1558.3 534.3 L1562.4 513.1M1566.5 532.3 L1570.6 511.1M1574.8 530.3 L1578.9 509.2M1583 528.4 L1587.1 507.2M1591.3 526.4 L1594.8 508.2M1537.6 519 L1541.8 538.2M1545.9 517 L1550 536.2M1554.1 515.1 L1558.3 534.3M1562.4 513.1 L1566.5 532.3M1570.6 511.1 L1574.8 530.3M1578.9 509.2 L1583 528.4M1587.1 507.2 L1591.3 526.4" fill="none" stroke="#0000ff" stroke-width="2.7"/><polygon points="1533.5,520 1594.8,505.4 1568.4,492.5 1507.1,507.2" fill="url(#tp)" stroke="#0000ff" stroke-width="2.3" stroke-linejoin="round"/>
<polygon points="1436.4,544.2 1462.8,557 1462.8,536.8 1436.4,524" fill="#8686f4" stroke="#0000ff" stroke-width="2.7" stroke-linejoin="round"/><path d="M1436.4 544.2 L1439.3 525.4M1442.2 547 L1445.1 528.2M1448 549.8 L1450.8 531M1453.7 552.6 L1456.6 533.8M1459.5 555.4 L1462.4 536.6M1439.3 525.4 L1442.2 547M1445.1 528.2 L1448 549.8M1450.8 531 L1453.7 552.6M1456.6 533.8 L1459.5 555.4M1462.4 536.6 L1462.8 539.7" fill="none" stroke="#0000ff" stroke-width="2.7"/><polygon points="1462.8,557 1524.1,542.4 1524.1,522.2 1462.8,536.8" fill="#8c8cf5" stroke="#0000ff" stroke-width="2.7" stroke-linejoin="round"/><path d="M1462.8 557 L1466.9 535.8M1471.1 555 L1475.2 533.9M1479.3 553.1 L1483.4 531.9M1487.6 551.1 L1491.7 529.9M1495.8 549.1 L1499.9 528M1504.1 547.2 L1508.2 526M1512.3 545.2 L1516.4 524M1520.6 543.2 L1524.1 525.1M1466.9 535.8 L1471.1 555M1475.2 533.9 L1479.3 553.1M1483.4 531.9 L1487.6 551.1M1491.7 529.9 L1495.8 549.1M1499.9 528 L1504.1 547.2M1508.2 526 L1512.3 545.2M1516.4 524 L1520.6 543.2" fill="none" stroke="#0000ff" stroke-width="2.7"/><polygon points="1462.8,536.8 1524.1,522.2 1497.7,509.4 1436.4,524" fill="url(#tp)" stroke="#0000ff" stroke-width="2.3" stroke-linejoin="round"/>
<polygon points="1365.7,561 1392.1,573.9 1392.1,553.7 1365.7,540.9" fill="#8686f4" stroke="#0000ff" stroke-width="2.7" stroke-linejoin="round"/><path d="M1365.7 561 L1368.6 542.3M1371.5 563.8 L1374.4 545.1M1377.2 566.6 L1380.1 547.9M1383 569.5 L1385.9 550.7M1388.8 572.3 L1391.7 553.5M1368.6 542.3 L1371.5 563.8M1374.4 545.1 L1377.2 566.6M1380.1 547.9 L1383 569.5M1385.9 550.7 L1388.8 572.3M1391.7 553.5 L1392.1 556.6" fill="none" stroke="#0000ff" stroke-width="2.7"/><polygon points="1392.1,573.9 1453.4,559.3 1453.4,539.1 1392.1,553.7" fill="#8c8cf5" stroke="#0000ff" stroke-width="2.7" stroke-linejoin="round"/><path d="M1392.1 573.9 L1396.2 552.7M1400.4 571.9 L1404.5 550.7M1408.6 569.9 L1412.7 548.8M1416.8 568 L1421 546.8M1425.1 566 L1429.2 544.8M1433.3 564 L1437.5 542.9M1441.6 562.1 L1445.7 540.9M1449.8 560.1 L1453.4 541.9M1396.2 552.7 L1400.4 571.9M1404.5 550.7 L1408.6 569.9M1412.7 548.8 L1416.8 568M1421 546.8 L1425.1 566M1429.2 544.8 L1433.3 564M1437.5 542.9 L1441.6 562.1M1445.7 540.9 L1449.8 560.1" fill="none" stroke="#0000ff" stroke-width="2.7"/><polygon points="1392.1,553.7 1453.4,539.1 1427,526.2 1365.7,540.9" fill="url(#tp)" stroke="#0000ff" stroke-width="2.3" stroke-linejoin="round"/>
<polygon points="1295,577.9 1321.4,590.7 1321.4,570.5 1295,557.7" fill="#8686f4" stroke="#0000ff" stroke-width="2.7" stroke-linejoin="round"/><path d="M1295 577.9 L1297.9 559.1M1300.8 580.7 L1303.6 561.9M1306.5 583.5 L1309.4 564.7M1312.3 586.3 L1315.2 567.5M1318.1 589.1 L1321 570.3M1297.9 559.1 L1300.8 580.7M1303.6 561.9 L1306.5 583.5M1309.4 564.7 L1312.3 586.3M1315.2 567.5 L1318.1 589.1M1321 570.3 L1321.4 573.4" fill="none" stroke="#0000ff" stroke-width="2.7"/><polygon points="1321.4,590.7 1382.7,576.1 1382.7,555.9 1321.4,570.5" fill="#8c8cf5" stroke="#0000ff" stroke-width="2.7" stroke-linejoin="round"/><path d="M1321.4 590.7 L1325.5 569.5M1329.6 588.7 L1333.8 567.6M1337.9 586.8 L1342 565.6M1346.1 584.8 L1350.3 563.6M1354.4 582.8 L1358.5 561.7M1362.6 580.9 L1366.8 559.7M1370.9 578.9 L1375 557.7M1379.1 576.9 L1382.7 558.8M1325.5 569.5 L1329.6 588.7M1333.8 567.6 L1337.9 586.8M1342 565.6 L1346.1 584.8M1350.3 563.6 L1354.4 582.8M1358.5 561.7 L1362.6 580.9M1366.8 559.7 L1370.9 578.9M1375 557.7 L1379.1 576.9" fill="none" stroke="#0000ff" stroke-width="2.7"/><polygon points="1321.4,570.5 1382.7,555.9 1356.3,543.1 1295,557.7" fill="url(#tp)" stroke="#0000ff" stroke-width="2.3" stroke-linejoin="round"/>
<polygon points="1224.3,594.7 1250.7,607.6 1250.7,587.4 1224.3,574.6" fill="#8686f4" stroke="#0000ff" stroke-width="2.7" stroke-linejoin="round"/><path d="M1224.3 594.7 L1227.2 576M1230 597.5 L1232.9 578.8M1235.8 600.4 L1238.7 581.6M1241.6 603.2 L1244.5 584.4M1247.4 606 L1250.3 587.2M1227.2 576 L1230 597.5M1232.9 578.8 L1235.8 600.4M1238.7 581.6 L1241.6 603.2M1244.5 584.4 L1247.4 606M1250.3 587.2 L1250.7 590.3" fill="none" stroke="#0000ff" stroke-width="2.7"/><polygon points="1250.7,607.6 1312,593 1312,572.8 1250.7,587.4" fill="#8c8cf5" stroke="#0000ff" stroke-width="2.7" stroke-linejoin="round"/><path d="M1250.7 607.6 L1254.8 586.4M1258.9 605.6 L1263.1 584.4M1267.2 603.6 L1271.3 582.5M1275.4 601.7 L1279.6 580.5M1283.7 599.7 L1287.8 578.5M1291.9 597.7 L1296.1 576.6M1300.2 595.8 L1304.3 574.6M1308.4 593.8 L1312 575.7M1254.8 586.4 L1258.9 605.6M1263.1 584.4 L1267.2 603.6M1271.3 582.5 L1275.4 601.7M1279.6 580.5 L1283.7 599.7M1287.8 578.5 L1291.9 597.7M1296.1 576.6 L1300.2 595.8M1304.3 574.6 L1308.4 593.8" fill="none" stroke="#0000ff" stroke-width="2.7"/><polygon points="1250.7,587.4 1312,572.8 1285.5,560 1224.3,574.6" fill="url(#tp)" stroke="#0000ff" stroke-width="2.3" stroke-linejoin="round"/>
<polygon points="1153.6,611.6 1180,624.4 1180,604.2 1153.6,591.4" fill="#8686f4" stroke="#0000ff" stroke-width="2.7" stroke-linejoin="round"/><path d="M1153.6 611.6 L1156.4 592.8M1159.3 614.4 L1162.2 595.6M1165.1 617.2 L1168 598.4M1170.9 620 L1173.8 601.2M1176.7 622.8 L1179.6 604M1156.4 592.8 L1159.3 614.4M1162.2 595.6 L1165.1 617.2M1168 598.4 L1170.9 620M1173.8 601.2 L1176.7 622.8M1179.6 604 L1180 607.1" fill="none" stroke="#0000ff" stroke-width="2.7"/><polygon points="1180,624.4 1241.3,609.8 1241.3,589.6 1180,604.2" fill="#8c8cf5" stroke="#0000ff" stroke-width="2.7" stroke-linejoin="round"/><path d="M1180 624.4 L1184.1 603.2M1188.2 622.4 L1192.3 601.3M1196.5 620.5 L1200.6 599.3M1204.7 618.5 L1208.8 597.3M1213 616.5 L1217.1 595.4M1221.2 614.6 L1225.3 593.4M1229.5 612.6 L1233.6 591.4M1237.7 610.6 L1241.3 592.5M1184.1 603.2 L1188.2 622.4M1192.3 601.3 L1196.5 620.5M1200.6 599.3 L1204.7 618.5M1208.8 597.3 L1213 616.5M1217.1 595.4 L1221.2 614.6M1225.3 593.4 L1229.5 612.6M1233.6 591.4 L1237.7 610.6" fill="none" stroke="#0000ff" stroke-width="2.7"/><polygon points="1180,604.2 1241.3,589.6 1214.8,576.8 1153.6,591.4" fill="url(#tp)" stroke="#0000ff" stroke-width="2.3" stroke-linejoin="round"/>
<polygon points="1082.8,628.4 1109.3,641.3 1109.3,621.1 1082.8,608.3" fill="#8686f4" stroke="#0000ff" stroke-width="2.7" stroke-linejoin="round"/><path d="M1082.8 628.4 L1085.7 609.7M1088.6 631.2 L1091.5 612.5M1094.4 634.1 L1097.3 615.3M1100.2 636.9 L1103.1 618.1M1106 639.7 L1108.8 620.9M1085.7 609.7 L1088.6 631.2M1091.5 612.5 L1094.4 634.1M1097.3 615.3 L1100.2 636.9M1103.1 618.1 L1106 639.7M1108.8 620.9 L1109.3 624" fill="none" stroke="#0000ff" stroke-width="2.7"/><polygon points="1109.3,641.3 1170.5,626.7 1170.5,606.5 1109.3,621.1" fill="#8c8cf5" stroke="#0000ff" stroke-width="2.7" stroke-linejoin="round"/><path d="M1109.3 641.3 L1113.4 620.1M1117.5 639.3 L1121.6 618.1M1125.8 637.3 L1129.9 616.2M1134 635.4 L1138.1 614.2M1142.3 633.4 L1146.4 612.2M1150.5 631.4 L1154.6 610.3M1158.8 629.5 L1162.9 608.3M1167 627.5 L1170.5 609.4M1113.4 620.1 L1117.5 639.3M1121.6 618.1 L1125.8 637.3M1129.9 616.2 L1134 635.4M1138.1 614.2 L1142.3 633.4M1146.4 612.2 L1150.5 631.4M1154.6 610.3 L1158.8 629.5M1162.9 608.3 L1167 627.5" fill="none" stroke="#0000ff" stroke-width="2.7"/><polygon points="1109.3,621.1 1170.5,606.5 1144.1,593.7 1082.8,608.3" fill="url(#tp)" stroke="#0000ff" stroke-width="2.3" stroke-linejoin="round"/>
<polygon points="1012.1,645.3 1038.6,658.1 1038.6,637.9 1012.1,625.1" fill="#8686f4" stroke="#0000ff" stroke-width="2.7" stroke-linejoin="round"/><path d="M1012.1 645.3 L1015 626.5M1017.9 648.1 L1020.8 629.3M1023.7 650.9 L1026.6 632.1M1029.5 653.7 L1032.4 634.9M1035.2 656.5 L1038.1 637.7M1015 626.5 L1017.9 648.1M1020.8 629.3 L1023.7 650.9M1026.6 632.1 L1029.5 653.7M1032.4 634.9 L1035.2 656.5M1038.1 637.7 L1038.6 640.8" fill="none" stroke="#0000ff" stroke-width="2.7"/><polygon points="1038.6,658.1 1099.8,643.5 1099.8,623.3 1038.6,637.9" fill="#8c8cf5" stroke="#0000ff" stroke-width="2.7" stroke-linejoin="round"/><path d="M1038.6 658.1 L1042.7 636.9M1046.8 656.1 L1050.9 635M1055.1 654.2 L1059.2 633M1063.3 652.2 L1067.4 631M1071.5 650.2 L1075.7 629.1M1079.8 648.3 L1083.9 627.1M1088 646.3 L1092.2 625.1M1096.3 644.4 L1099.8 626.2M1042.7 636.9 L1046.8 656.1M1050.9 635 L1055.1 654.2M1059.2 633 L1063.3 652.2M1067.4 631 L1071.5 650.2M1075.7 629.1 L1079.8 648.3M1083.9 627.1 L1088 646.3M1092.2 625.1 L1096.3 644.4" fill="none" stroke="#0000ff" stroke-width="2.7"/><polygon points="1038.6,637.9 1099.8,623.3 1073.4,610.5 1012.1,625.1" fill="url(#tp)" stroke="#0000ff" stroke-width="2.3" stroke-linejoin="round"/>
<polygon points="941.4,662.1 967.8,675 967.8,654.8 941.4,642" fill="#8686f4" stroke="#0000ff" stroke-width="2.7" stroke-linejoin="round"/><path d="M941.4 662.1 L944.3 643.4M947.2 665 L950.1 646.2M953 667.8 L955.9 649M958.8 670.6 L961.7 651.8M964.5 673.4 L967.4 654.6M944.3 643.4 L947.2 665M950.1 646.2 L953 667.8M955.9 649 L958.8 670.6M961.7 651.8 L964.5 673.4M967.4 654.6 L967.8 657.7" fill="none" stroke="#0000ff" stroke-width="2.7"/><polygon points="967.8,675 1029.1,660.4 1029.1,640.2 967.8,654.8" fill="#8c8cf5" stroke="#0000ff" stroke-width="2.7" stroke-linejoin="round"/><path d="M967.8 675 L972 653.8M976.1 673 L980.2 651.8M984.3 671 L988.5 649.9M992.6 669.1 L996.7 647.9M1000.8 667.1 L1005 645.9M1009.1 665.1 L1013.2 644M1017.3 663.2 L1021.5 642M1025.6 661.2 L1029.1 643.1M972 653.8 L976.1 673M980.2 651.8 L984.3 671M988.5 649.9 L992.6 669.1M996.7 647.9 L1000.8 667.1M1005 645.9 L1009.1 665.1M1013.2 644 L1017.3 663.2M1021.5 642 L1025.6 661.2" fill="none" stroke="#0000ff" stroke-width="2.7"/><polygon points="967.8,654.8 1029.1,640.2 1002.7,627.4 941.4,642" fill="url(#tp)" stroke="#0000ff" stroke-width="2.3" stroke-linejoin="round"/>
<polygon points="900.2,672 926.6,684.8 926.6,664.6 900.2,651.8" fill="#8686f4" stroke="#0000ff" stroke-width="2.7" stroke-linejoin="round"/><path d="M900.2 672 L903.1 653.2M906 674.8 L908.8 656M911.7 677.6 L914.6 658.8M917.5 680.4 L920.4 661.6M923.3 683.2 L926.2 664.4M903.1 653.2 L906 674.8M908.8 656 L911.7 677.6M914.6 658.8 L917.5 680.4M920.4 661.6 L923.3 683.2M926.2 664.4 L926.6 667.5" fill="none" stroke="#0000ff" stroke-width="2.7"/><polygon points="926.6,684.8 956.1,677.8 956.1,657.6 926.6,664.6" fill="#8c8cf5" stroke="#0000ff" stroke-width="2.7" stroke-linejoin="round"/><path d="M926.6 684.8 L930.7 663.6M934.8 682.8 L939 661.7M943.1 680.9 L947.2 659.7M951.3 678.9 L955.5 657.7M930.7 663.6 L934.8 682.8M939 661.7 L943.1 680.9M947.2 659.7 L951.3 678.9M955.5 657.7 L956.1 660.5" fill="none" stroke="#0000ff" stroke-width="2.7"/><polygon points="926.6,664.6 956.1,657.6 929.6,644.8 900.2,651.8" fill="url(#tp)" stroke="#0000ff" stroke-width="2.3" stroke-linejoin="round"/></g>
<path d="M1691.3 802.4 L913.5 987.8 L641.1 855.6 L641.1 535M948.9 979.3 L966.5 988.6M1066.7 951.3 L1084.3 960.6M1184.6 923.2 L1202.2 932.5M1302.4 895.1 L1320 904.4M1420.3 867 L1437.9 876.3M1538.1 838.9 L1555.7 848.2M1656 810.8 L1673.6 820.1M901.1 981.8 L883.6 987.1M818.6 941.7 L801.1 947M736 901.7 L718.5 907M653.5 861.6 L636 866.9M641.1 841.1 L623.3 832.6M641.1 787.2 L623.3 778.7M641.1 733.4 L623.3 724.9M641.1 679.5 L623.3 671M641.1 625.7 L623.3 617.2M641.1 571.9 L623.3 563.4" fill="none" stroke="#262626" stroke-width="1.15"/>
<g font-family="'Liberation Sans', Arial, sans-serif" font-size="26.1" fill="#404040"><text x="975.5" y="1021.1">0</text><text x="1093.3" y="993.1">0.05</text><text x="1211.2" y="965">0.1</text><text x="1329" y="936.9">0.15</text><text x="1446.9" y="908.8">0.2</text><text x="1564.7" y="880.7">0.25</text><text x="1682.6" y="852.6">0.3</text><text x="872.6" y="1017.3" text-anchor="end">0</text><text x="790.1" y="977.2" text-anchor="end">0.05</text><text x="707.5" y="937.2" text-anchor="end">0.1</text><text x="625" y="897.1" text-anchor="end">0.15</text><text x="611.8" y="838.1" text-anchor="end">0</text><text x="611.8" y="784.2" text-anchor="end">0.02</text><text x="611.8" y="730.4" text-anchor="end">0.04</text><text x="611.8" y="676.5" text-anchor="end">0.06</text><text x="611.8" y="622.7" text-anchor="end">0.08</text><text x="611.8" y="568.9" text-anchor="end">0.1</text>
<text x="1218" y="1027" text-anchor="middle" font-size="29.3">x</text>
<text x="733.5" y="1041" text-anchor="middle" font-size="29.3">y</text>
<text transform="translate(545,695) rotate(-90)" text-anchor="middle" font-size="29.3">z</text>
</g>
<path d="M259 1077.7 L223.3 1056.9" stroke="#0cf20c" stroke-width="2.7" fill="none"/><polygon points="216.8,1053.1 226.1,1055 223,1060.3" fill="#0cf20c" stroke="#0cf20c" stroke-width="0.8" stroke-linejoin="round"/>
<path d="M259 1077.7 L305.7 1062.4" stroke="#ff0606" stroke-width="2.7" fill="none"/><polygon points="313.8,1059.7 305.2,1065.5 303.4,1060.2" fill="#ff0606" stroke="#ff0606" stroke-width="0.8" stroke-linejoin="round"/>
<path d="M259 1077.7 L259 1031.9" stroke="#0a0aff" stroke-width="3.4" fill="none"/><polygon points="259,1024.1 264,1033.4 254,1033.4" fill="#0a0aff" stroke="#0a0aff" stroke-width="0.8" stroke-linejoin="round"/>
<rect x="256.3" y="1076.4" width="5.4" height="4.6" rx="1.5" fill="#7c7c7c"/>
</svg>
<div style="left:163px;top:1178.3px;width:2006px;height:1.8px;background:#c6c6c6;"></div>
<div style="left:165px;top:1180.7px;width:2003px;height:13.5px;background:#cccccc;border-bottom:1.2px solid #bcbcbc;box-sizing:border-box;"></div>
<div style="left:163px;top:1194.6px;width:2006px;height:2px;background:#fbfbfb;"></div>
<div style="left:1115px;top:1181.3px;width:99.6px;height:12.3px;background:#999999;border-left:2px solid #fff;border-top:1.6px solid #fff;border-right:1.6px solid #6e6e6e;box-sizing:border-box;"></div>
<div style="left:163px;top:1200.6px;width:2006px;height:1.6px;background:#d2d2d2;"></div>
<div style="left:165px;top:1203px;width:1912px;height:43.5px;background:#c8dcfd;border-left:1px solid #a9b8d6;border-top:1px solid #dfe6f3;box-sizing:border-box;"></div>
<span class="t" style="left:183.5px;transform-origin:0 0;top:1210.1px;font-family:'Liberation Mono', 'Courier New', monospace;font-size:26.7px;font-weight:bold;color:#000;">Command Log</span>
<div style="left:2076.3px;top:1203px;width:1.6px;height:44px;background:#a3a8b4;"></div>
<div style="left:2165.6px;top:1203px;width:1.6px;height:44px;background:#9a9fab;"></div>
<div style="left:2079px;top:1203.7px;width:85.7px;height:43px;background:#cce4f7;border:1.6px solid #1b64a8;box-sizing:border-box;"></div>
<span class="t" style="left:2104.8px;transform-origin:0 0;top:1210.8px;font-family:'Liberation Sans', Arial, sans-serif;font-size:26.2px;color:#000;transform:scaleX(1.0327);">&lt;&lt;</span>
<div style="left:165px;top:1246px;width:2002px;height:267.5px;background:#e9e9e9;border:2px solid #868b94;border-top:2px solid #8a8e97;box-sizing:border-box;"></div>
<div style="left:167px;top:1249px;width:1874px;height:262px;overflow:hidden;font-family:'Liberation Mono','Courier New',monospace;font-size:26.67px;line-height:34.73px;color:#222;"><div style="position:absolute;left:49px;top:-9.8px;white-space:pre">    grid cell mean volume: 1.7580e-08</div><div style="position:absolute;left:49px;top:24.9px;white-space:pre">     grid cell max volume: 8.1226e-08</div><div style="position:absolute;left:49px;top:59.7px;white-space:pre">    grid cell min quality: 0.1979</div><div style="position:absolute;left:49px;top:94.4px;white-space:pre">   grid cell mean quality: 0.8433</div><div style="position:absolute;left:49px;top:129.1px;white-space:pre">     number of boundaries: 562</div><div style="position:absolute;left:49px;top:163.8px;white-space:pre">     number of subdomains: 100</div><div style="position:absolute;left:49px;top:198.6px;white-space:pre"> time for grid generation: 26.2063</div></div>
<div style="left:2041px;top:1249px;width:35.5px;height:262px;background:#f0f0f0;"></div>
<div style="left:2043px;top:1463px;width:31.5px;height:14.5px;background:#cdcdcd;"></div>
<svg class="a" style="left:2041px;top:1249px" width="36" height="262"><path d="M10.5 23.5L18 15.5L25.5 23.5M10.5 242L18 250L25.5 242" fill="none" stroke="#5a5a5a" stroke-width="3.2"/></svg>
<div style="left:2076.5px;top:1247px;width:2px;height:265px;background:#868b94;"></div>
<div style="left:2078.5px;top:1249px;width:52.5px;height:229px;background:#e9e9e9;overflow:hidden;font-family:'Liberation Mono','Courier New',monospace;font-size:26.67px;line-height:34.7px;color:#807a76;"><div style="position:absolute;left:19px;top:38.2px;font-style:italic;">Tip</div><div style="position:absolute;left:19px;top:72.9px;">the</div><div style="position:absolute;left:19px;top:107.6px;">wit</div><div style="position:absolute;left:19px;top:142.3px;">rep</div></div>
<div style="left:2131px;top:1249px;width:34.5px;height:229px;background:#f0f0f0;"></div>
<div style="left:2078.5px;top:1478px;width:87px;height:33.5px;background:#f0f0f0;"></div>
<svg class="a" style="left:2078px;top:1249px" width="88" height="263"><path d="M62.5 23.5L70 15.5L77.5 23.5M62.5 209.5L70 217.5L77.5 209.5" fill="none" stroke="#c4c4c4" stroke-width="3.2"/><path d="M15.5 240.5L11 245L15.5 249.5M37.5 240.5L42 245L37.5 249.5" fill="none" stroke="#c8c8c8" stroke-width="2.6"/></svg>
<div style="left:161px;top:1513.2px;width:2011px;height:2.6px;background:#dcdcdc;"></div>
<div style="left:0px;top:1515.7px;width:2172px;height:1.3px;background:#5a6778;"></div>
</body></html>
